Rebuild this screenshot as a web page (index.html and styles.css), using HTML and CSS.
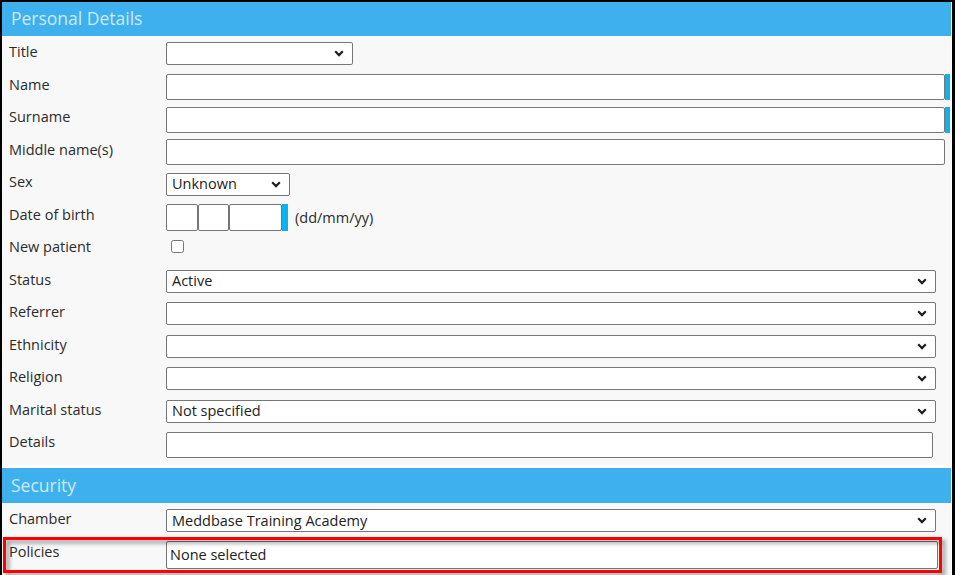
FILE: index.html
```html
<!DOCTYPE html>
<html lang="en">
<head>
<meta charset="utf-8">
<title>Personal Details</title>
<link rel="stylesheet" href="styles.css">
</head>
<body>
<div class="frame">
  <section class="section personal">
    <h2 class="section-head">Personal Details</h2>
    <div class="rows">
      <div class="row">
        <label class="lbl">Title</label>
        <div class="select w-title"><span class="sel-text"></span><svg class="chev" width="10" height="7" viewBox="0 0 10 7"><path d="M1.2 1.3 L5 5.1 L8.8 1.3" fill="none" stroke="#1e1e1e" stroke-width="2.2"/></svg></div>
      </div>
      <div class="row">
        <label class="lbl">Name</label>
        <input class="text w-long" type="text"><span class="req"></span>
      </div>
      <div class="row">
        <label class="lbl">Surname</label>
        <input class="text w-long" type="text"><span class="req"></span>
      </div>
      <div class="row">
        <label class="lbl">Middle name(s)</label>
        <input class="text w-long" type="text">
      </div>
      <div class="row">
        <label class="lbl">Sex</label>
        <div class="select w-sex"><span class="sel-text">Unknown</span><svg class="chev" width="10" height="7" viewBox="0 0 10 7"><path d="M1.2 1.3 L5 5.1 L8.8 1.3" fill="none" stroke="#1e1e1e" stroke-width="2.2"/></svg></div>
      </div>
      <div class="row">
        <label class="lbl">Date of birth</label>
        <div class="dob">
          <input class="text dob-d" type="text"><input class="text dob-m" type="text"><input class="text dob-y" type="text"><span class="req dob-req"></span>
          <span class="hint">(dd/mm/yy)</span>
        </div>
      </div>
      <div class="row">
        <label class="lbl">New patient</label>
        <input class="check" type="checkbox">
      </div>
      <div class="row">
        <label class="lbl">Status</label>
        <div class="select w-wide"><span class="sel-text">Active</span><svg class="chev" width="10" height="7" viewBox="0 0 10 7"><path d="M1.2 1.3 L5 5.1 L8.8 1.3" fill="none" stroke="#1e1e1e" stroke-width="2.2"/></svg></div>
      </div>
      <div class="row">
        <label class="lbl">Referrer</label>
        <div class="select w-wide"><span class="sel-text"></span><svg class="chev" width="10" height="7" viewBox="0 0 10 7"><path d="M1.2 1.3 L5 5.1 L8.8 1.3" fill="none" stroke="#1e1e1e" stroke-width="2.2"/></svg></div>
      </div>
      <div class="row">
        <label class="lbl">Ethnicity</label>
        <div class="select w-wide"><span class="sel-text"></span><svg class="chev" width="10" height="7" viewBox="0 0 10 7"><path d="M1.2 1.3 L5 5.1 L8.8 1.3" fill="none" stroke="#1e1e1e" stroke-width="2.2"/></svg></div>
      </div>
      <div class="row">
        <label class="lbl">Religion</label>
        <div class="select w-wide"><span class="sel-text"></span><svg class="chev" width="10" height="7" viewBox="0 0 10 7"><path d="M1.2 1.3 L5 5.1 L8.8 1.3" fill="none" stroke="#1e1e1e" stroke-width="2.2"/></svg></div>
      </div>
      <div class="row">
        <label class="lbl">Marital status</label>
        <div class="select w-wide"><span class="sel-text">Not specified</span><svg class="chev" width="10" height="7" viewBox="0 0 10 7"><path d="M1.2 1.3 L5 5.1 L8.8 1.3" fill="none" stroke="#1e1e1e" stroke-width="2.2"/></svg></div>
      </div>
      <div class="row">
        <label class="lbl">Details</label>
        <input class="text w-details" type="text">
      </div>
    </div>
  </section>
  <section class="section security">
    <h2 class="section-head">Security</h2>
    <div class="rows">
      <div class="row row-chamber">
        <label class="lbl">Chamber</label>
        <div class="select w-wide"><span class="sel-text">Meddbase Training Academy</span><svg class="chev" width="10" height="7" viewBox="0 0 10 7"><path d="M1.2 1.3 L5 5.1 L8.8 1.3" fill="none" stroke="#1e1e1e" stroke-width="2.2"/></svg></div>
      </div>
      <div class="row row-policies">
        <label class="lbl">Policies</label>
        <div class="multi">None selected</div>
      </div>
    </div>
  </section>
</div>
</body>
</html>
```
FILE: styles.css
```css
*, *::before, *::after { box-sizing: border-box; }

html, body {
  margin: 0;
  padding: 0;
  background: #ffffff;
}

body {
  font-family: "Open Sans", "Noto Sans", "Liberation Sans", sans-serif;
  font-size: 14.5px;
  color: #2b2b2b;
}

.frame {
  width: 955px;
  height: 575px;
  overflow: hidden;
  border-top: 2px solid #000;
  border-left: 2px solid #000;
  border-right: 3px solid #000;
  padding-right: 1px;
  background: #ffffff;
}

.section-head {
  margin: 0;
  height: 34px;
  padding: 4px 0 0 9px;
  background: #3eb0ee;
  color: #cdeafa;
  font-size: 17.5px;
  font-weight: 400;
  line-height: 24px;
}

.security .section-head {
  height: 35px;
  padding-top: 5px;
}

.personal {
  margin-bottom: 3px;
}

.rows {
  background: #f8f8f8;
}

.personal .rows {
  padding-bottom: 6.5px;
}

.row {
  display: flex;
  align-items: flex-start;
  height: 32.5px;
}

.lbl {
  flex: 0 0 164px;
  padding: 6px 0 0 7px;
  line-height: 20px;
  color: #2b2b2b;
}

.select {
  display: flex;
  align-items: center;
  justify-content: space-between;
  height: 23px;
  margin-top: 6px;
  padding: 0 8px 0 5px;
  background: #fff;
  border: 1px solid #767676;
  border-radius: 2px;
  color: #222;
  line-height: 20px;
}

.chev { flex: 0 0 auto; }

.w-title { width: 187px; }
.w-sex { width: 124px; margin-top: 6.5px; height: 23px; }
.w-wide { width: 770px; }

.text {
  height: 26px;
  margin: 5.5px 0 0;
  padding: 0 4px;
  background: #fff;
  border: 1px solid #767676;
  border-radius: 2px;
  font: inherit;
  outline: none;
}

.w-long { width: 779px; }
.w-details { width: 767px; }

.req {
  width: 5px;
  height: 26px;
  margin-top: 5.5px;
  background: #0eb0ee;
}

.dob {
  display: flex;
  align-items: flex-start;
}

.dob .text { height: 27px; }
.dob-d { width: 32px; }
.dob-m { width: 31px; }
.dob-y { width: 53px; }
.dob-req { height: 27px; width: 6px; }

.hint {
  margin: 9px 0 0 7px;
  line-height: 20px;
  color: #2b2b2b;
}

.check {
  width: 13px;
  height: 13px;
  margin: 9px 0 0 5px;
}

.row-chamber { height: 34px; }

.row-policies {
  position: relative;
  height: 38px;
}

.row-policies .lbl { padding-top: 5px; }

.multi {
  width: 772px;
  height: 28px;
  margin-top: 4px;
  padding: 2px 3px;
  background: #fff;
  border: 1px solid #767676;
  border-radius: 2px;
  color: #222;
  line-height: 22px;
}

.row-policies::after {
  content: "";
  position: absolute;
  left: 1px;
  top: 0;
  width: 939px;
  height: 36px;
  border: 3px solid #ff0000;
  filter: drop-shadow(3px 3px 2px rgba(0, 0, 0, 0.45));
  pointer-events: none;
}
```
